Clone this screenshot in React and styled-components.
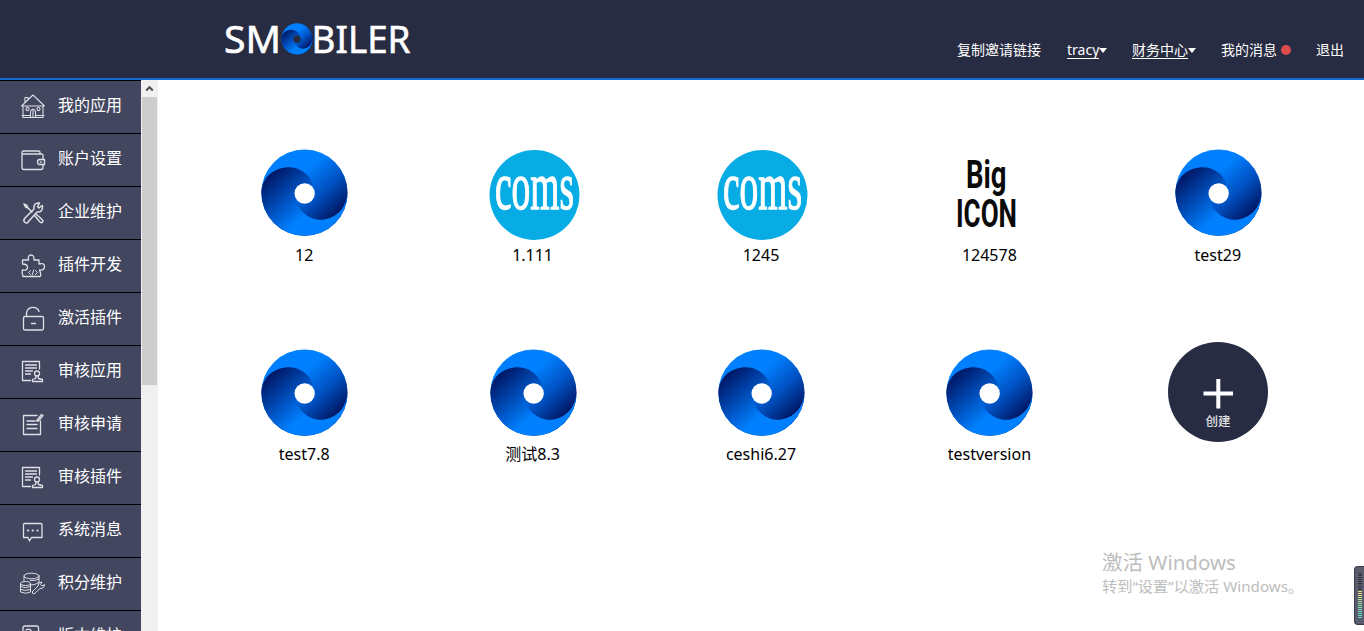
import React from "react";
import styled, { createGlobalStyle, css } from "styled-components";

const latin = '"Noto Sans", "Noto Sans CJK SC", sans-serif';
const cjk = '"Noto Sans CJK SC", "Noto Sans", sans-serif';

const GlobalStyle = createGlobalStyle`
  *, *::before, *::after { box-sizing: border-box; }
  body { margin: 0; overflow: hidden; background: #fff; font-family: ${latin}; }
`;

const Page = styled.div`
  position: relative;
  display: flex;
  flex-direction: column;
  height: 631px;
  overflow: hidden;
`;

const Header = styled.header`
  display: flex;
  flex: none;
  justify-content: space-between;
  height: 80px;
  padding: 0 20px 0 220px;
  background: #282c42;
  border-bottom: 2px solid #1469cf;
`;

const Logo = styled.svg`
  width: 200px;
  height: 78px;
  font-family: ${latin};
`;

const Nav = styled.nav`
  display: flex;
  gap: 25px;
  padding-top: 40px;
`;

const NavItem = styled.a`
  display: flex;
  align-items: center;
  height: 20px;
  color: #fff;
  font-size: 14px;
  line-height: 20px;
  white-space: nowrap;
`;

const NavLabel = styled.span`
  ${(p) => p.$width && css`width: ${p.$width}px;`}
  ${(p) => p.$underlined && css`
    height: 17px;
    line-height: 16px;
    border-bottom: 1px solid #fff;
  `}
`;

const Caret = styled.span`
  margin-top: 1px;
  border: 4px solid transparent;
  border-top: 5px solid #fff;
  border-bottom: 0;
`;

const Dot = styled.span`
  width: 10px;
  height: 10px;
  margin-left: 4px;
  border-radius: 50%;
  background: #dc4c4c;
`;

const Body = styled.div`
  display: flex;
  flex: 1;
  min-height: 0;
`;

const Sidebar = styled.aside`
  display: flex;
  flex: none;
  flex-direction: column;
  width: 141px;
  overflow: hidden;
  background: #42465f;
`;

const MenuItem = styled.a`
  display: flex;
  flex: none;
  align-items: flex-start;
  gap: 12px;
  height: 53px;
  padding: 13px 0 0 20px;
  border-top: 1px solid #000;
  color: #fff;
  font-family: ${cjk};
  font-size: 16px;
  line-height: 20px;
  white-space: nowrap;
`;

const MenuIcon = styled.svg`
  flex: none;
  width: 26px;
  height: 26px;
  fill: none;
  stroke: #dfe0e6;
  stroke-width: ${(p) => p.$stroke || 1.3};
  stroke-linecap: round;
  stroke-linejoin: round;
`;

const Scrollbar = styled.div`
  flex: none;
  width: 17px;
  padding: 0 1px;
  background: #f0f0f0;
`;

const ScrollArrow = styled.svg`
  display: block;
  width: 15px;
  height: 17px;
`;

const Thumb = styled.div`
  height: 288px;
  background: #cdcdcd;
`;

const Apps = styled.main`
  display: grid;
  flex: 1;
  grid-template-columns: repeat(5, 228.4px);
  grid-auto-rows: 199.6px;
  padding: 62px 0 0 32px;
`;

const AppTile = styled.div`
  display: flex;
  flex-direction: column;
  align-items: center;
  color: #000;
  font-size: 16px;
  line-height: 24px;
`;

const AppIcon = styled.svg`
  width: 100px;
  height: 101px;
  margin-bottom: -0.25px;
  overflow: visible;
`;

const Watermark = styled.div`
  position: absolute;
  left: 1102px;
  top: 549px;
  color: #bdbdbd;
  white-space: nowrap;
`;

const WatermarkTitle = styled.div`
  font-size: 20.5px;
  line-height: 27px;
`;

const WatermarkText = styled.div`
  font-size: 15.2px;
  line-height: 21px;
`;

const Meter = styled.div`
  position: absolute;
  top: 566px;
  right: 0;
  display: flex;
  flex-direction: column;
  gap: 1px;
  width: 10px;
  height: 59px;
  padding: 6px 2px 0 3px;
  border: 1px solid #393c48;
  border-right: 0;
  border-radius: 4px 0 0 4px;
  background: #5a5d6e;
`;

const MeterBar = styled.span`
  height: 1px;
  background: ${(p) => p.$color};
`;

const Swirl = ({ hole = "#fff" }) => (
  <>
    <defs>
      <linearGradient id="bladeRight" gradientUnits="userSpaceOnUse" x1="305" y1="215" x2="195" y2="95">
        <stop offset="0" stopColor="#001460" />
        <stop offset=".5" stopColor="#0050c0" />
        <stop offset="1" stopColor="#0080ff" />
      </linearGradient>
      <linearGradient id="bladeLeft" gradientUnits="userSpaceOnUse" x1="82" y1="102" x2="192" y2="228">
        <stop offset="0" stopColor="#001460" />
        <stop offset=".5" stopColor="#0048b2" />
        <stop offset="1" stopColor="#0080ff" />
      </linearGradient>
    </defs>
    <circle cx="193.500" cy="157.500" r="129.500" fill="url(#bladeRight)" />
    <path
      d="M64 157C66 105 110 80 148 81S215 108 222 145L194 160L166 178C172 207 205 239 242 239S318 212 323 158A129.500 129.500 0 0 1 64 157Z"
      fill="url(#bladeLeft)"
    />
    <circle cx="194" cy="160" r="30.500" fill={hole} />
  </>
);

const SwirlIcon = () => (
  <AppIcon viewBox="0 0 100 101">
    <g transform="translate(-14 -1.800) scale(.3333)">
      <Swirl />
    </g>
  </AppIcon>
);

const ComsIcon = () => (
  <AppIcon viewBox="0 0 100 101">
    <circle cx="51.500" cy="53" r="45" fill="#08ace4" />
    <text x="12" y="66.500" fontFamily="Liberation Serif, serif" fontSize="67" fill="#fff" stroke="#fff" strokeWidth="1.300" textLength="79" lengthAdjust="spacingAndGlyphs">coms</text>
  </AppIcon>
);

const BigIcon = () => (
  <AppIcon viewBox="0 0 100 101" fontFamily="Roboto, sans-serif" fontWeight="700" fontSize="39" fill="#0a0a0a">
    <text x="27" y="45.500" textLength="40.500" lengthAdjust="spacingAndGlyphs">Big</text>
    <text x="17" y="84.500" textLength="61" lengthAdjust="spacingAndGlyphs">ICON</text>
  </AppIcon>
);

const CreateIcon = () => (
  <AppIcon viewBox="0 0 100 101">
    <circle cx="50" cy="50" r="50" fill="#282c42" />
    <path d="M50.300 37V66.500M35.500 51.500H65" stroke="#fff" strokeWidth="4" />
    <text x="50" y="84" textAnchor="middle" fontFamily="Noto Sans CJK SC, sans-serif" fontWeight="500" fontSize="12.500" fill="#e0e0e4">创建</text>
  </AppIcon>
);

const auditGlyph = (
  <>
    <path d="M10.500 21.500H2.500V2.500H19.500V10" />
    <path d="M5.500 6H16.500M5.500 9H16.500M5.500 12H12.500M5.500 15H10.500" />
    <circle cx="17" cy="14.500" r="2.500" />
    <path d="M16 17L15.500 19.500L12.500 20.500V22.500H22.500V20.500L18.500 19.500L18 17" />
  </>
);

const glyphs = {
  home: (
    <>
      <path d="M1.500 12L13 1L24.500 12H1.500M3 12V23.500H23V12M2 21.500H10M16 21.500H24M5 8.500V3.500H8V5.500" />
      <path d="M10.500 23V17.500Q13 12.500 15.500 17.500V23M13 16V23" />
      <circle cx="7.500" cy="15" r="1.600" /><circle cx="18.500" cy="15" r="1.600" />
    </>
  ),
  wallet: (
    <>
      <path d="M20 7V5.500Q20 4 18.500 4H3.500C1.500 4 1.500 7 3.500 7H21.500Q23 7 23 8.500V12.500M23 18V20.500Q23 22.500 21 22.500H4Q2 22.500 2 20.500V5.500" />
      <path d="M24.500 12.500H19.500Q17.500 12.500 17.500 15T19.500 17.500H24.500ZM20.300 15H21.200" />
    </>
  ),
  tools: (
    <>
      <path d="M4 4L7 5.500L8 8L12 12M4 4L5.500 7L8 8M14.500 15.500L19.500 21.500Q21.500 23.500 22.500 22T21.500 19L16 14" />
      <path d="M22 5.500L19 8L17.500 6.500L19.500 3Q13 2.500 14 9L4.500 18.500Q3 21 5 22.500T8.500 21.500L17 12Q23 12.500 22.500 6Z" />
    </>
  ),
  plugin: (
    <>
      <path d="M2.500 7H8.500Q7.500 2 11 2T14 7H19V11Q24.500 9.500 24.500 13.500T19.500 17Q22 23.500 19.500 23.500H3Q1.500 18 2.500 17Q7.500 18 7.500 14.500T2.500 11Z" />
      <path d="M10.500 17.500L8.500 19.500L10.500 21.500M15.500 17.500L17.500 19.500L15.500 21.500M13.700 17L12.200 22" strokeWidth="1" />
    </>
  ),
  lock: <path d="M6.500 10.500C5.500-1 17.500-.5 19 5.500M5 10.500H22Q23.500 10.500 23.500 12V22.500Q23.500 24 22 24H5Q3.500 24 3.500 22.500V12Q3.500 10.500 5 10.500ZM11.500 17.500H15.500" />,
  audit: auditGlyph,
  edit: (
    <>
      <path d="M17 3.500H3.500V22.500H20.500V9M7 9H15M7 12.500H17M7 16.500H17" />
      <path d="M16.500 9L21.500 2.500L23 3.500L18.500 9Z" />
    </>
  ),
  chat: (
    <>
      <path d="M4 5.500H21Q22 5.500 22 6.500V19.500H11.500L9.500 23L8 19.500H3.500V6.500Z" />
      <path d="M8 12.500H8.100M12.700 12.500H12.800M17.500 12.500H17.600" strokeWidth="2.200" />
    </>
  ),
  points: (
    <>
      <ellipse cx="11.500" cy="5" rx="7.500" ry="2.800" />
      <path d="M4 5V9.500M19 5V11.500M11 14Q15 14.500 18.500 11.500M10.500 9.500Q16.500 10 19 8" />
      <ellipse cx="5.500" cy="12.500" rx="5" ry="2" />
      <path d="M.5 12.500V21Q5.500 23.500 10.500 21V12.500M.5 15.500Q5.500 18 10.500 15.500M.5 18.500Q5.500 20.500 10.500 18.500" />
      <path d="M12.500 20.500L18 15Q18 11 22 11L20.500 13.500L22 15L24.500 13.500Q24.500 17.500 20 17.500L14 23Q11.500 23 12.500 20.500Z" />
    </>
  ),
  version: (
    <>
      <path d="M3 24V4Q3 2 5 2H17Q18.500 2 18.500 4V7L21 9V24" />
      <path d="M6 6Q9 4 11 6.500L10 9L13 12" />
    </>
  ),
};

const strokeWidths = { home: 1.05, points: 1, tools: 1.5 };

const menu = [
  ["home", "我的应用"],
  ["wallet", "账户设置"],
  ["tools", "企业维护"],
  ["plugin", "插件开发"],
  ["lock", "激活插件"],
  ["audit", "审核应用"],
  ["edit", "审核申请"],
  ["audit", "审核插件"],
  ["chat", "系统消息"],
  ["points", "积分维护"],
  ["version", "版本维护"],
];

const apps = [
  [SwirlIcon, "12"],
  [ComsIcon, "1.111"],
  [ComsIcon, "1245"],
  [BigIcon, "124578"],
  [SwirlIcon, "test29"],
  [SwirlIcon, "test7.8"],
  [SwirlIcon, "测试8.3"],
  [SwirlIcon, "ceshi6.27"],
  [SwirlIcon, "testversion"],
  [CreateIcon, ""],
];

const meterColors = [
  ...Array(9).fill("#30333f"),
  "#e8d87c", "#e2dc80", "#d4e084", "#c6e28a", "#b8e490", "#aae498", "#9ce4a0",
  "#90e4a8", "#84e4b2", "#7ae4bc", "#70e2c4", "#68e0cc", "#62dcd0", "#5cd8d0",
];

export default function App() {
  return (
    <>
      <GlobalStyle />
      <Page>
        <Header>
          <Logo viewBox="0 0 200 78" fill="#fff" fontSize="38.500">
            <g stroke="#fff" strokeWidth=".6">
              <text x="4" y="52.500" textLength="57" lengthAdjust="spacingAndGlyphs">SM</text>
              <text x="91.500" y="52.500" textLength="99" lengthAdjust="spacingAndGlyphs">BILER</text>
            </g>
            <g transform="translate(53.800 20) scale(.12)">
              <Swirl hole="#282c42" />
            </g>
          </Logo>
          <Nav>
            <NavItem><NavLabel $width={85}>复制邀请链接</NavLabel></NavItem>
            <NavItem><NavLabel $width={32} $underlined>tracy</NavLabel><Caret /></NavItem>
            <NavItem><NavLabel $width={56} $underlined>财务中心</NavLabel><Caret /></NavItem>
            <NavItem><NavLabel $width={56}>我的消息</NavLabel><Dot /></NavItem>
            <NavItem><NavLabel $width={28}>退出</NavLabel></NavItem>
          </Nav>
        </Header>
        <Body>
          <Sidebar>
            {menu.map(([icon, label]) => (
              <MenuItem key={label}>
                <MenuIcon viewBox="0 0 26 26" $stroke={strokeWidths[icon]}>{glyphs[icon]}</MenuIcon>
                {label}
              </MenuItem>
            ))}
          </Sidebar>
          <Scrollbar>
            <ScrollArrow viewBox="0 0 15 17">
              <path d="M4.200 10.500L7.500 7.200L10.800 10.500" fill="none" stroke="#505050" strokeWidth="2" />
            </ScrollArrow>
            <Thumb />
          </Scrollbar>
          <Apps>
            {apps.map(([Icon, label], i) => (
              <AppTile key={i}>
                <Icon />
                {label}
              </AppTile>
            ))}
          </Apps>
        </Body>
        <Watermark>
          <WatermarkTitle>激活 Windows</WatermarkTitle>
          <WatermarkText>转到“设置”以激活 Windows。</WatermarkText>
        </Watermark>
        <Meter>
          {meterColors.map((color, i) => (
            <MeterBar key={i} $color={color} />
          ))}
        </Meter>
      </Page>
    </>
  );
}
